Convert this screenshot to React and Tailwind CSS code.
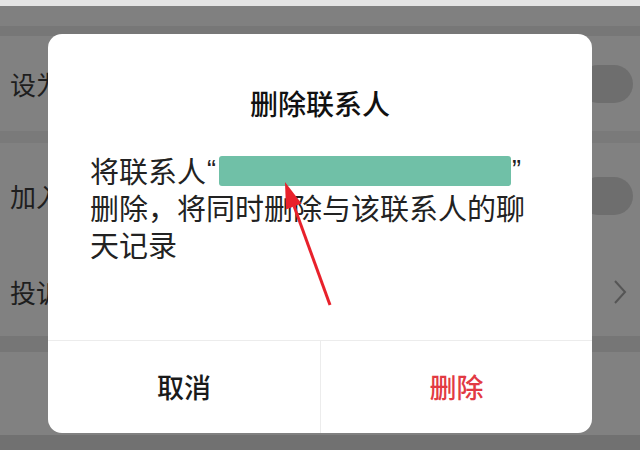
import React from 'react';

// 背景列表（被遮罩变暗）
const rows = [
  { label: '设为星标朋友', h: 'h-[95px]', toggle: true },
  { label: '加入黑名单', h: 'h-[105px]', toggle: true },
  { label: '投诉', h: 'h-[88px]', chevron: true },
];

function BgRow({ row }) {
  return (
    <div className={`${row.h} flex items-center justify-between pl-[10px] pr-[7px] bg-[#818181]`}>
      <span className="text-[26px] leading-none text-[#1e1e1e]">{row.label}</span>
      {row.toggle && <div className="w-[54px] h-[38px] rounded-full bg-[#6e6e6e]"></div>}
      {row.chevron && (
        <svg width="14" height="26" viewBox="0 0 14 26" className="mr-[6px]">
          <path d="M2 2 L12 13 L2 24" fill="none" stroke="#555" strokeWidth="2" />
        </svg>
      )}
    </div>
  );
}

export default function App() {
  return (
    <div className="relative w-[640px] h-[450px] overflow-hidden bg-[#7e7e7e] font-['Noto_Sans_CJK_SC',sans-serif]">
      {/* 背景 */}
      <div className="flex flex-col">
        <div className="h-[6px] bg-[#e4e4e4]"></div>
        <div className="h-[20px] bg-[#808080]"></div>
        <div className="h-[10px] bg-[#777777]"></div>
        <BgRow row={rows[0]} />
        <div className="h-[12px] bg-[#7a7a7a]"></div>
        <BgRow row={rows[1]} />
        <BgRow row={rows[2]} />
        <div className="h-[16px] bg-[#767676]"></div>
        <div className="h-[83px] bg-[#818181]"></div>
        <div className="h-[20px] bg-[#717171]"></div>
      </div>

      {/* 对话框 */}
      <div className="absolute left-[48px] top-[34px] w-[544px] h-[399px] bg-white rounded-[14px] flex flex-col overflow-hidden">
        <div className="pt-[51px] text-center text-[28px] leading-[36px] font-medium text-[#111]">删除联系人</div>
        <div className="flex-1 pt-[31px] pl-[42px] text-[29px] leading-[37px] text-[#222]">
          <div className="flex items-center h-[37px]">
            <span>将联系人</span>
            <span className="font-['Liberation_Sans',sans-serif] text-[27px] ml-[1px]">“</span>
            <span className="ml-[3px] inline-block w-[292px] h-[30px] rounded-[3px] bg-[#70c0a7]"></span>
            <span className="font-['Liberation_Sans',sans-serif] text-[27px] ml-[1px]">”</span>
          </div>
          <div>删除，将同时删除与该联系人的聊</div>
          <div>天记录</div>
        </div>
        <div className="h-[93px] grid grid-cols-2 border-t border-[#ececec]">
          <button className="flex items-center justify-center text-[27px] font-medium text-[#1a1a1a]">取消</button>
          <button className="flex items-center justify-center border-l border-[#ececec] text-[27px] font-medium text-[#e23a43]">删除</button>
        </div>
      </div>

      {/* 红色箭头标注 */}
      <svg className="absolute left-0 top-0" width="640" height="450" viewBox="0 0 640 450">
        <line x1="330" y1="305" x2="294" y2="206" stroke="#e8212b" strokeWidth="3" />
        <polygon points="285,182 301.5,203.5 286,209.5" fill="#e8212b" />
      </svg>
    </div>
  );
}
